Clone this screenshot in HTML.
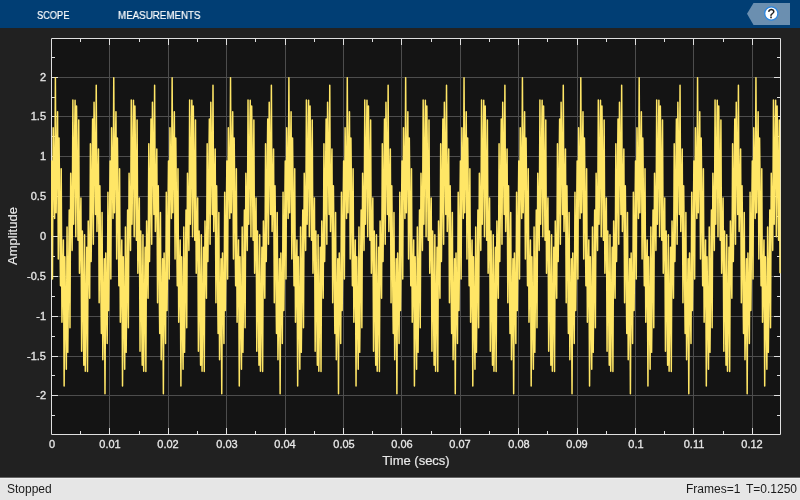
<!DOCTYPE html>
<html><head><meta charset="utf-8"><style>
html,body{margin:0;padding:0;width:800px;height:500px;overflow:hidden;background:#212121;font-family:"Liberation Sans",sans-serif}
#hdr{position:absolute;left:0;top:0;width:800px;height:28px;background:#013e74}
.tab{position:absolute;top:8px;will-change:transform;-webkit-text-stroke:0.2px #fff;transform-origin:0 0;color:#fff;font-size:11px;line-height:14px;white-space:nowrap}
#status{position:absolute;left:0;top:477px;width:800px;height:23px;background:#e6e6e6;border-top:1px solid #666;box-shadow:inset 0 1px 0 #f0f0f0;box-sizing:border-box}
.st{position:absolute;top:4px;will-change:transform;font-size:12px;line-height:14px;color:#1a1a1a;white-space:nowrap}
svg{position:absolute;left:0;top:0}
.xl{position:absolute;top:437px;will-change:transform;-webkit-text-stroke:0.3px #e8e8e8;width:40px;text-align:center;font-size:11px;line-height:14px;color:#e8e8e8}
.yl{position:absolute;left:0;will-change:transform;-webkit-text-stroke:0.3px #e8e8e8;width:46px;text-align:right;font-size:11px;line-height:14px;color:#e8e8e8}
#xlab{position:absolute;left:0;top:453px;will-change:transform;-webkit-text-stroke:0.2px #e8e8e8;width:832px;text-align:center;font-size:13px;line-height:16px;color:#e8e8e8}
#ylab{position:absolute;left:-22px;will-change:transform;-webkit-text-stroke:0.2px #e8e8e8;top:228px;width:70px;text-align:center;font-size:13px;line-height:16px;color:#e8e8e8;transform:rotate(-90deg)}
</style></head><body>
<div id="hdr">
<div class="tab" style="left:37px;transform:scaleX(0.84)">SCOPE</div>
<div class="tab" style="left:118px;transform:scaleX(0.888)">MEASUREMENTS</div>
<svg width="800" height="28" viewBox="0 0 800 28">
<polygon points="747,13.8 753.5,3 790,3 790,25 753.5,25" fill="#6b8fb0"/>
<circle cx="771.3" cy="13.5" r="6.6" fill="#fff" stroke="#2b86e0" stroke-width="1.3"/>
<text x="771.3" y="18" text-anchor="middle" font-family="Liberation Sans" font-size="12.5" fill="#111" stroke="#111" stroke-width="0.3">?</text>
</svg>
</div>
<svg width="800" height="500" viewBox="0 0 800 500" style="top:0">
<rect x="51" y="38" width="730" height="397" fill="#141414"/>
<path d="M109.5 39V434M168.5 39V434M226.5 39V434M285.5 39V434M343.5 39V434M401.5 39V434M460.5 39V434M518.5 39V434M577.5 39V434M635.5 39V434M693.5 39V434M752.5 39V434M52 77.5H780M52 116.5H780M52 156.5H780M52 196.5H780M52 236.5H780M52 276.5H780M52 316.5H780M52 356.5H780M52 395.5H780" stroke="#4d4d4d" stroke-width="1" fill="none"/>
<path d="M51.5 434v-6M51.5 39v6M109.5 434v-6M109.5 39v6M168.5 434v-6M168.5 39v6M226.5 434v-6M226.5 39v6M285.5 434v-6M285.5 39v6M343.5 434v-6M343.5 39v6M401.5 434v-6M401.5 39v6M460.5 434v-6M460.5 39v6M518.5 434v-6M518.5 39v6M577.5 434v-6M577.5 39v6M635.5 434v-6M635.5 39v6M693.5 434v-6M693.5 39v6M752.5 434v-6M752.5 39v6M80.5 434v-3M80.5 39v3M139.5 434v-3M139.5 39v3M197.5 434v-3M197.5 39v3M255.5 434v-3M255.5 39v3M314.5 434v-3M314.5 39v3M372.5 434v-3M372.5 39v3M431.5 434v-3M431.5 39v3M489.5 434v-3M489.5 39v3M547.5 434v-3M547.5 39v3M606.5 434v-3M606.5 39v3M664.5 434v-3M664.5 39v3M723.5 434v-3M723.5 39v3M52 77.5h6M780 77.5h-6M52 116.5h6M780 116.5h-6M52 156.5h6M780 156.5h-6M52 196.5h6M780 196.5h-6M52 236.5h6M780 236.5h-6M52 276.5h6M780 276.5h-6M52 316.5h6M780 316.5h-6M52 356.5h6M780 356.5h-6M52 395.5h6M780 395.5h-6M52 57.5h3M780 57.5h-3M52 97.5h3M780 97.5h-3M52 136.5h3M780 136.5h-3M52 176.5h3M780 176.5h-3M52 216.5h3M780 216.5h-3M52 256.5h3M780 256.5h-3M52 296.5h3M780 296.5h-3M52 336.5h3M780 336.5h-3M52 375.5h3M780 375.5h-3M52 415.5h3M780 415.5h-3" stroke="#e0e0e0" stroke-width="1" fill="none"/>
<path d="M51.5 38.5H780.5V434.5H51.5Z" stroke="#e0e0e0" stroke-width="1" fill="none"/>
<defs><clipPath id="cp"><rect x="51" y="38" width="730" height="397"/></clipPath></defs>
<g clip-path="url(#cp)"><path d="M51.00 235.70 51.73 160.93 52.46 279.11 53.19 127.85 53.92 171.38 54.65 218.47 55.38 77.68 56.11 212.66 56.84 160.09 57.57 111.70 58.30 258.99 59.03 137.95 59.76 211.13 60.49 285.68 61.22 168.64 61.95 322.34 62.68 282.43 63.41 239.94 64.14 386.04 64.87 256.79 65.59 315.20 66.32 369.22 67.05 227.04 67.78 352.37 68.51 282.43 69.24 209.91 69.97 327.64 70.70 173.25 71.43 211.13 72.16 250.38 72.89 99.99 73.62 224.13 74.35 160.09 75.08 100.23 75.81 236.68 76.54 106.04 77.27 171.38 78.00 240.28 78.73 120.11 79.46 273.36 80.19 235.70 80.92 198.04 81.65 351.29 82.38 231.12 83.11 300.02 83.84 365.36 84.57 234.72 85.30 371.17 86.03 311.31 86.76 247.27 87.49 371.41 88.22 221.02 88.95 260.27 89.68 298.15 90.41 143.76 91.14 261.49 91.87 188.97 92.60 119.03 93.33 244.36 94.06 102.18 94.78 156.20 95.51 214.61 96.24 85.36 96.97 231.46 97.70 188.97 98.43 149.06 99.16 302.76 99.89 185.72 100.62 260.27 101.35 333.45 102.08 212.41 102.81 359.70 103.54 311.31 104.27 258.74 105.00 393.72 105.73 252.93 106.46 300.02 107.19 343.55 107.92 192.29 108.65 310.47 109.38 235.70 110.11 160.93 110.84 279.11 111.57 127.85 112.30 171.38 113.03 218.47 113.76 77.68 114.49 212.66 115.22 160.09 115.95 111.70 116.68 258.99 117.41 137.95 118.14 211.13 118.87 285.68 119.60 168.64 120.33 322.34 121.06 282.43 121.79 239.94 122.52 386.04 123.25 256.79 123.98 315.20 124.70 369.22 125.43 227.04 126.16 352.37 126.89 282.43 127.62 209.91 128.35 327.64 129.08 173.25 129.81 211.13 130.54 250.38 131.27 99.99 132.00 224.13 132.73 160.09 133.46 100.23 134.19 236.68 134.92 106.04 135.65 171.38 136.38 240.28 137.11 120.11 137.84 273.36 138.57 235.70 139.30 198.04 140.03 351.29 140.76 231.12 141.49 300.02 142.22 365.36 142.95 234.72 143.68 371.17 144.41 311.31 145.14 247.27 145.87 371.41 146.60 221.02 147.33 260.27 148.06 298.15 148.79 143.76 149.52 261.49 150.25 188.97 150.98 119.03 151.71 244.36 152.44 102.18 153.17 156.20 153.89 214.61 154.62 85.36 155.35 231.46 156.08 188.97 156.81 149.06 157.54 302.76 158.27 185.72 159.00 260.27 159.73 333.45 160.46 212.41 161.19 359.70 161.92 311.31 162.65 258.74 163.38 393.72 164.11 252.93 164.84 300.02 165.57 343.55 166.30 192.29 167.03 310.47 167.76 235.70 168.49 160.93 169.22 279.11 169.95 127.85 170.68 171.38 171.41 218.47 172.14 77.68 172.87 212.66 173.60 160.09 174.33 111.70 175.06 258.99 175.79 137.95 176.52 211.13 177.25 285.68 177.98 168.64 178.71 322.34 179.44 282.43 180.17 239.94 180.90 386.04 181.63 256.79 182.35 315.20 183.08 369.22 183.81 227.04 184.54 352.37 185.27 282.43 186.00 209.91 186.73 327.64 187.46 173.25 188.19 211.13 188.92 250.38 189.65 99.99 190.38 224.13 191.11 160.09 191.84 100.23 192.57 236.68 193.30 106.04 194.03 171.38 194.76 240.28 195.49 120.11 196.22 273.36 196.95 235.70 197.68 198.04 198.41 351.29 199.14 231.12 199.87 300.02 200.60 365.36 201.33 234.72 202.06 371.17 202.79 311.31 203.52 247.27 204.25 371.41 204.98 221.02 205.71 260.27 206.44 298.15 207.17 143.76 207.90 261.49 208.63 188.97 209.36 119.03 210.09 244.36 210.82 102.18 211.54 156.20 212.27 214.61 213.00 85.36 213.73 231.46 214.46 188.97 215.19 149.06 215.92 302.76 216.65 185.72 217.38 260.27 218.11 333.45 218.84 212.41 219.57 359.70 220.30 311.31 221.03 258.74 221.76 393.72 222.49 252.93 223.22 300.02 223.95 343.55 224.68 192.29 225.41 310.47 226.14 235.70 226.87 160.93 227.60 279.11 228.33 127.85 229.06 171.38 229.79 218.47 230.52 77.68 231.25 212.66 231.98 160.09 232.71 111.70 233.44 258.99 234.17 137.95 234.90 211.13 235.63 285.68 236.36 168.64 237.09 322.34 237.82 282.43 238.55 239.94 239.28 386.04 240.01 256.79 240.74 315.20 241.46 369.22 242.19 227.04 242.92 352.37 243.65 282.43 244.38 209.91 245.11 327.64 245.84 173.25 246.57 211.13 247.30 250.38 248.03 99.99 248.76 224.13 249.49 160.09 250.22 100.23 250.95 236.68 251.68 106.04 252.41 171.38 253.14 240.28 253.87 120.11 254.60 273.36 255.33 235.70 256.06 198.04 256.79 351.29 257.52 231.12 258.25 300.02 258.98 365.36 259.71 234.72 260.44 371.17 261.17 311.31 261.90 247.27 262.63 371.41 263.36 221.02 264.09 260.27 264.82 298.15 265.55 143.76 266.28 261.49 267.01 188.97 267.74 119.03 268.47 244.36 269.20 102.18 269.92 156.20 270.65 214.61 271.38 85.36 272.11 231.46 272.84 188.97 273.57 149.06 274.30 302.76 275.03 185.72 275.76 260.27 276.49 333.45 277.22 212.41 277.95 359.70 278.68 311.31 279.41 258.74 280.14 393.72 280.87 252.93 281.60 300.02 282.33 343.55 283.06 192.29 283.79 310.47 284.52 235.70 285.25 160.93 285.98 279.11 286.71 127.85 287.44 171.38 288.17 218.47 288.90 77.68 289.63 212.66 290.36 160.09 291.09 111.70 291.82 258.99 292.55 137.95 293.28 211.13 294.01 285.68 294.74 168.64 295.47 322.34 296.20 282.43 296.93 239.94 297.66 386.04 298.39 256.79 299.12 315.20 299.84 369.22 300.57 227.04 301.30 352.37 302.03 282.43 302.76 209.91 303.49 327.64 304.22 173.25 304.95 211.13 305.68 250.38 306.41 99.99 307.14 224.13 307.87 160.09 308.60 100.23 309.33 236.68 310.06 106.04 310.79 171.38 311.52 240.28 312.25 120.11 312.98 273.36 313.71 235.70 314.44 198.04 315.17 351.29 315.90 231.12 316.63 300.02 317.36 365.36 318.09 234.72 318.82 371.17 319.55 311.31 320.28 247.27 321.01 371.41 321.74 221.02 322.47 260.27 323.20 298.15 323.93 143.76 324.66 261.49 325.39 188.97 326.12 119.03 326.85 244.36 327.58 102.18 328.31 156.20 329.03 214.61 329.76 85.36 330.49 231.46 331.22 188.97 331.95 149.06 332.68 302.76 333.41 185.72 334.14 260.27 334.87 333.45 335.60 212.41 336.33 359.70 337.06 311.31 337.79 258.74 338.52 393.72 339.25 252.93 339.98 300.02 340.71 343.55 341.44 192.29 342.17 310.47 342.90 235.70 343.63 160.93 344.36 279.11 345.09 127.85 345.82 171.38 346.55 218.47 347.28 77.68 348.01 212.66 348.74 160.09 349.47 111.70 350.20 258.99 350.93 137.95 351.66 211.13 352.39 285.68 353.12 168.64 353.85 322.34 354.58 282.43 355.31 239.94 356.04 386.04 356.77 256.79 357.50 315.20 358.22 369.22 358.95 227.04 359.68 352.37 360.41 282.43 361.14 209.91 361.87 327.64 362.60 173.25 363.33 211.13 364.06 250.38 364.79 99.99 365.52 224.13 366.25 160.09 366.98 100.23 367.71 236.68 368.44 106.04 369.17 171.38 369.90 240.28 370.63 120.11 371.36 273.36 372.09 235.70 372.82 198.04 373.55 351.29 374.28 231.12 375.01 300.02 375.74 365.36 376.47 234.72 377.20 371.17 377.93 311.31 378.66 247.27 379.39 371.41 380.12 221.02 380.85 260.27 381.58 298.15 382.31 143.76 383.04 261.49 383.77 188.97 384.50 119.03 385.23 244.36 385.96 102.18 386.69 156.20 387.41 214.61 388.14 85.36 388.87 231.46 389.60 188.97 390.33 149.06 391.06 302.76 391.79 185.72 392.52 260.27 393.25 333.45 393.98 212.41 394.71 359.70 395.44 311.31 396.17 258.74 396.90 393.72 397.63 252.93 398.36 300.02 399.09 343.55 399.82 192.29 400.55 310.47 401.28 235.70 402.01 160.93 402.74 279.11 403.47 127.85 404.20 171.38 404.93 218.47 405.66 77.68 406.39 212.66 407.12 160.09 407.85 111.70 408.58 258.99 409.31 137.95 410.04 211.13 410.77 285.68 411.50 168.64 412.23 322.34 412.96 282.43 413.69 239.94 414.42 386.04 415.15 256.79 415.88 315.20 416.60 369.22 417.33 227.04 418.06 352.37 418.79 282.43 419.52 209.91 420.25 327.64 420.98 173.25 421.71 211.13 422.44 250.38 423.17 99.99 423.90 224.13 424.63 160.09 425.36 100.23 426.09 236.68 426.82 106.04 427.55 171.38 428.28 240.28 429.01 120.11 429.74 273.36 430.47 235.70 431.20 198.04 431.93 351.29 432.66 231.12 433.39 300.02 434.12 365.36 434.85 234.72 435.58 371.17 436.31 311.31 437.04 247.27 437.77 371.41 438.50 221.02 439.23 260.27 439.96 298.15 440.69 143.76 441.42 261.49 442.15 188.97 442.88 119.03 443.61 244.36 444.34 102.18 445.06 156.20 445.79 214.61 446.52 85.36 447.25 231.46 447.98 188.97 448.71 149.06 449.44 302.76 450.17 185.72 450.90 260.27 451.63 333.45 452.36 212.41 453.09 359.70 453.82 311.31 454.55 258.74 455.28 393.72 456.01 252.93 456.74 300.02 457.47 343.55 458.20 192.29 458.93 310.47 459.66 235.70 460.39 160.93 461.12 279.11 461.85 127.85 462.58 171.38 463.31 218.47 464.04 77.68 464.77 212.66 465.50 160.09 466.23 111.70 466.96 258.99 467.69 137.95 468.42 211.13 469.15 285.68 469.88 168.64 470.61 322.34 471.34 282.43 472.07 239.94 472.80 386.04 473.53 256.79 474.25 315.20 474.98 369.22 475.71 227.04 476.44 352.37 477.17 282.43 477.90 209.91 478.63 327.64 479.36 173.25 480.09 211.13 480.82 250.38 481.55 99.99 482.28 224.13 483.01 160.09 483.74 100.23 484.47 236.68 485.20 106.04 485.93 171.38 486.66 240.28 487.39 120.11 488.12 273.36 488.85 235.70 489.58 198.04 490.31 351.29 491.04 231.12 491.77 300.02 492.50 365.36 493.23 234.72 493.96 371.17 494.69 311.31 495.42 247.27 496.15 371.41 496.88 221.02 497.61 260.27 498.34 298.15 499.07 143.76 499.80 261.49 500.53 188.97 501.26 119.03 501.99 244.36 502.72 102.18 503.44 156.20 504.17 214.61 504.90 85.36 505.63 231.46 506.36 188.97 507.09 149.06 507.82 302.76 508.55 185.72 509.28 260.27 510.01 333.45 510.74 212.41 511.47 359.70 512.20 311.31 512.93 258.74 513.66 393.72 514.39 252.93 515.12 300.02 515.85 343.55 516.58 192.29 517.31 310.47 518.04 235.70 518.77 160.93 519.50 279.11 520.23 127.85 520.96 171.38 521.69 218.47 522.42 77.68 523.15 212.66 523.88 160.09 524.61 111.70 525.34 258.99 526.07 137.95 526.80 211.13 527.53 285.68 528.26 168.64 528.99 322.34 529.72 282.43 530.45 239.94 531.18 386.04 531.91 256.79 532.63 315.20 533.36 369.22 534.09 227.04 534.82 352.37 535.55 282.43 536.28 209.91 537.01 327.64 537.74 173.25 538.47 211.13 539.20 250.38 539.93 99.99 540.66 224.13 541.39 160.09 542.12 100.23 542.85 236.68 543.58 106.04 544.31 171.38 545.04 240.28 545.77 120.11 546.50 273.36 547.23 235.70 547.96 198.04 548.69 351.29 549.42 231.12 550.15 300.02 550.88 365.36 551.61 234.72 552.34 371.17 553.07 311.31 553.80 247.27 554.53 371.41 555.26 221.02 555.99 260.27 556.72 298.15 557.45 143.76 558.18 261.49 558.91 188.97 559.64 119.03 560.37 244.36 561.10 102.18 561.83 156.20 562.55 214.61 563.28 85.36 564.01 231.46 564.74 188.97 565.47 149.06 566.20 302.76 566.93 185.72 567.66 260.27 568.39 333.45 569.12 212.41 569.85 359.70 570.58 311.31 571.31 258.74 572.04 393.72 572.77 252.93 573.50 300.02 574.23 343.55 574.96 192.29 575.69 310.47 576.42 235.70 577.15 160.93 577.88 279.11 578.61 127.85 579.34 171.38 580.07 218.47 580.80 77.68 581.53 212.66 582.26 160.09 582.99 111.70 583.72 258.99 584.45 137.95 585.18 211.13 585.91 285.68 586.64 168.64 587.37 322.34 588.10 282.43 588.83 239.94 589.56 386.04 590.29 256.79 591.01 315.20 591.74 369.22 592.47 227.04 593.20 352.37 593.93 282.43 594.66 209.91 595.39 327.64 596.12 173.25 596.85 211.13 597.58 250.38 598.31 99.99 599.04 224.13 599.77 160.09 600.50 100.23 601.23 236.68 601.96 106.04 602.69 171.38 603.42 240.28 604.15 120.11 604.88 273.36 605.61 235.70 606.34 198.04 607.07 351.29 607.80 231.12 608.53 300.02 609.26 365.36 609.99 234.72 610.72 371.17 611.45 311.31 612.18 247.27 612.91 371.41 613.64 221.02 614.37 260.27 615.10 298.15 615.83 143.76 616.56 261.49 617.29 188.97 618.02 119.03 618.75 244.36 619.48 102.18 620.21 156.20 620.93 214.61 621.66 85.36 622.39 231.46 623.12 188.97 623.85 149.06 624.58 302.76 625.31 185.72 626.04 260.27 626.77 333.45 627.50 212.41 628.23 359.70 628.96 311.31 629.69 258.74 630.42 393.72 631.15 252.93 631.88 300.02 632.61 343.55 633.34 192.29 634.07 310.47 634.80 235.70 635.53 160.93 636.26 279.11 636.99 127.85 637.72 171.38 638.45 218.47 639.18 77.68 639.91 212.66 640.64 160.09 641.37 111.70 642.10 258.99 642.83 137.95 643.56 211.13 644.29 285.68 645.02 168.64 645.75 322.34 646.48 282.43 647.21 239.94 647.94 386.04 648.67 256.79 649.39 315.20 650.12 369.22 650.85 227.04 651.58 352.37 652.31 282.43 653.04 209.91 653.77 327.64 654.50 173.25 655.23 211.13 655.96 250.38 656.69 99.99 657.42 224.13 658.15 160.09 658.88 100.23 659.61 236.68 660.34 106.04 661.07 171.38 661.80 240.28 662.53 120.11 663.26 273.36 663.99 235.70 664.72 198.04 665.45 351.29 666.18 231.12 666.91 300.02 667.64 365.36 668.37 234.72 669.10 371.17 669.83 311.31 670.56 247.27 671.29 371.41 672.02 221.02 672.75 260.27 673.48 298.15 674.21 143.76 674.94 261.49 675.67 188.97 676.40 119.03 677.13 244.36 677.86 102.18 678.59 156.20 679.31 214.61 680.04 85.36 680.77 231.46 681.50 188.97 682.23 149.06 682.96 302.76 683.69 185.72 684.42 260.27 685.15 333.45 685.88 212.41 686.61 359.70 687.34 311.31 688.07 258.74 688.80 393.72 689.53 252.93 690.26 300.02 690.99 343.55 691.72 192.29 692.45 310.47 693.18 235.70 693.91 160.93 694.64 279.11 695.37 127.85 696.10 171.38 696.83 218.47 697.56 77.68 698.29 212.66 699.02 160.09 699.75 111.70 700.48 258.99 701.21 137.95 701.94 211.13 702.67 285.68 703.40 168.64 704.13 322.34 704.86 282.43 705.59 239.94 706.32 386.04 707.05 256.79 707.77 315.20 708.50 369.22 709.23 227.04 709.96 352.37 710.69 282.43 711.42 209.91 712.15 327.64 712.88 173.25 713.61 211.13 714.34 250.38 715.07 99.99 715.80 224.13 716.53 160.09 717.26 100.23 717.99 236.68 718.72 106.04 719.45 171.38 720.18 240.28 720.91 120.11 721.64 273.36 722.37 235.70 723.10 198.04 723.83 351.29 724.56 231.12 725.29 300.02 726.02 365.36 726.75 234.72 727.48 371.17 728.21 311.31 728.94 247.27 729.67 371.41 730.40 221.02 731.13 260.27 731.86 298.15 732.59 143.76 733.32 261.49 734.05 188.97 734.78 119.03 735.51 244.36 736.24 102.18 736.96 156.20 737.69 214.61 738.42 85.36 739.15 231.46 739.88 188.97 740.61 149.06 741.34 302.76 742.07 185.72 742.80 260.27 743.53 333.45 744.26 212.41 744.99 359.70 745.72 311.31 746.45 258.74 747.18 393.72 747.91 252.93 748.64 300.02 749.37 343.55 750.10 192.29 750.83 310.47 751.56 235.70 752.29 160.93 753.02 279.11 753.75 127.85 754.48 171.38 755.21 218.47 755.94 77.68 756.67 212.66 757.40 160.09 758.13 111.70 758.86 258.99 759.59 137.95 760.32 211.13 761.05 285.68 761.78 168.64 762.51 322.34 763.24 282.43 763.97 239.94 764.70 386.04 765.43 256.79 766.15 315.20 766.88 369.22 767.61 227.04 768.34 352.37 769.07 282.43 769.80 209.91 770.53 327.64 771.26 173.25 771.99 211.13 772.72 250.38 773.45 99.99 774.18 224.13 774.91 160.09 775.64 100.23 776.37 236.68 777.10 106.04 777.83 171.38 778.56 240.28 779.29 120.11 780.02 273.36" stroke="#ffe666" stroke-width="1.5" fill="none" stroke-linejoin="round"/></g>
</svg>
<div class="xl" style="left:31.5px">0</div><div class="xl" style="left:89.9px">0.01</div><div class="xl" style="left:148.3px">0.02</div><div class="xl" style="left:206.7px">0.03</div><div class="xl" style="left:265.1px">0.04</div><div class="xl" style="left:323.5px">0.05</div><div class="xl" style="left:381.9px">0.06</div><div class="xl" style="left:440.3px">0.07</div><div class="xl" style="left:498.7px">0.08</div><div class="xl" style="left:557.1px">0.09</div><div class="xl" style="left:615.5px">0.1</div><div class="xl" style="left:673.9px">0.11</div><div class="xl" style="left:732.3px">0.12</div>
<div class="yl" style="top:69.5px">2</div><div class="yl" style="top:108.5px">1.5</div><div class="yl" style="top:148.5px">1</div><div class="yl" style="top:188.5px">0.5</div><div class="yl" style="top:228.5px">0</div><div class="yl" style="top:268.5px">-0.5</div><div class="yl" style="top:308.5px">-1</div><div class="yl" style="top:348.5px">-1.5</div><div class="yl" style="top:387.5px">-2</div>
<div id="xlab">Time (secs)</div>
<div id="ylab">Amplitude</div>
<div id="status">
<div class="st" style="left:7px">Stopped</div>
<div class="st" style="left:686px">Frames=1</div>
<div class="st" style="left:746px">T=0.1250</div>
</div>
</body></html>
